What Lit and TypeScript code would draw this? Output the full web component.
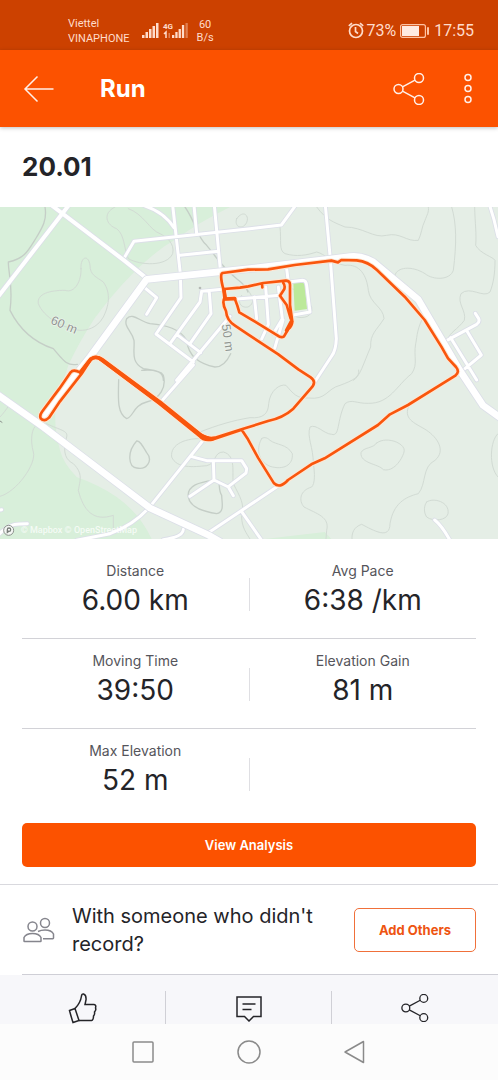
import { LitElement, html, css, svg } from "lit";
import { customElement, property } from "lit/decorators.js";

interface Stat {
  label: string;
  value: string;
}

const STATS: Stat[][] = [
  [
    { label: "Distance", value: "6.00 km" },
    { label: "Avg Pace", value: "6:38 /km" },
  ],
  [
    { label: "Moving Time", value: "39:50" },
    { label: "Elevation Gain", value: "81 m" },
  ],
  [{ label: "Max Elevation", value: "52 m" }],
];

const CONTOURS = [
  "M135 0C142 40 125 65 110 90C85 130 75 155 25 165C25 200 40 240 30 310C60 370 100 405 160 425C190 460 200 478 232 472",
  "M380 335C400 315 420 345 450 350C500 355 540 365 560 400C565 450 600 470 645 480C670 480 685 455 692 440",
  "M490 520C490 490 460 490 430 485C390 465 405 430 402 400C395 370 370 360 380 335",
  "M356 518C355 570 350 620 380 635C400 630 400 595 440 585C480 575 500 540 490 505C480 485 440 490 425 490",
  "M410 702C380 735 385 780 410 783C440 790 460 760 440 737C430 720 420 700 410 702Z",
  "M640 820C600 825 560 835 565 870C570 905 620 915 650 920C675 915 665 885 665 865C655 850 660 830 655 820",
  "M555 0C590 50 590 90 620 115C650 150 660 175 710 215C730 230 740 240 744 255",
];

const FAINT_CONTOURS = [
  "M243 185C240 150 265 140 270 175C270 205 290 210 310 225C335 260 325 300 310 330C290 365 260 370 240 370C190 365 130 330 115 290C110 260 150 250 195 250C225 260 245 220 243 185Z",
  "M345 0C305 20 320 55 350 65C375 85 370 120 385 155C420 175 500 180 518 140C525 110 500 90 480 80C450 70 430 20 385 5",
  "M710 35C730 8 745 25 742 40C735 70 700 65 710 35Z",
  "M0 868C50 855 110 770 100 735C90 700 95 660 110 655M140 650C180 670 205 670 200 690C185 740 200 760 220 770C250 800 240 820 235 850C250 910 280 945 340 925L340 975",
  "M610 695C560 692 510 710 515 750C530 785 580 780 620 776C650 770 640 735 670 735C710 745 695 800 700 830C720 870 735 890 725 930C725 960 740 980 750 996",
  "M600 675C650 655 700 640 750 632C790 635 805 620 806 590C810 550 840 530 858 535C880 560 890 575 925 573C980 580 980 545 1020 535C1060 520 1080 510 1076 489",
  "M950 0C980 40 1000 45 1035 60C1090 60 1120 95 1160 85C1200 75 1220 105 1255 100C1265 80 1265 60 1275 40C1280 25 1288 15 1285 0",
  "M840 60C845 100 835 130 855 140C890 150 920 145 950 135C975 140 995 170 1035 175C1080 170 1100 205 1105 250C1110 290 1150 300 1152 335C1130 370 1110 380 1112 420C1090 470 1080 510 1060 520",
  "M1355 0C1370 50 1370 110 1360 190C1350 220 1300 220 1275 200C1235 175 1190 180 1185 205",
  "M1424 0C1425 50 1430 80 1427 115C1440 140 1480 150 1485 160C1485 200 1480 230 1470 255C1450 275 1410 235 1383 260C1370 290 1400 310 1393 340C1370 370 1350 375 1345 395",
  "M1265 340C1250 370 1250 400 1247 410C1240 450 1255 470 1235 500C1190 535 1170 590 1105 589C1070 590 1055 575 1035 590C1010 640 1020 690 995 682C970 680 950 650 930 660C920 690 940 720 940 770C945 800 945 830 935 840C900 850 895 880 912 900C950 920 990 930 980 970L978 996",
  "M1225 600C1210 640 1250 650 1280 670C1310 690 1340 730 1305 760C1265 780 1280 830 1255 860C1215 870 1180 890 1170 950C1170 1000 1120 970 1085 952C1060 960 1055 980 1056 996",
  "M1130 708C1160 685 1220 710 1212 735C1205 760 1180 795 1150 788C1135 770 1080 770 1083 737C1090 720 1120 725 1130 708Z",
  "M785 695C770 720 770 760 810 778C850 790 880 775 877 740C860 710 830 715 810 700C800 690 790 690 785 695Z",
  "M1280 885C1300 870 1350 885 1344 920C1340 940 1300 945 1280 930C1270 915 1272 895 1280 885Z",
  "M1494 680C1470 700 1465 780 1494 810",
  "M0 630C10 620 20 605 25 598",
  "M875 245C900 250 920 275 935 300C940 330 910 335 890 330",
  "M744 250C760 270 765 290 744 300C720 305 710 280 725 265",
];

const STREETS = [
  "M430 -5Q492 15 522 62",
  "M518 -5L541 200L543 272L468 381L580 465",
  "M582 -5L590 80",
  "M643 -5L661 188",
  "M540 145L655 133",
  "M370 157L402 103L750 65L844 54L887 -5",
  "M435 243L470 272L440 322",
  "M675 246L605 253L600 285L510 410",
  "M628 257L633 320L570 410",
  "M530 382L602 437",
  "M690 328L530 520",
  "M580 474L485 582",
  "M976 -5L990 145L1009 395Q1008 430 995 447L942 528",
  "M860 185L865 225L908 220Q918 220 920 235L930 315L880 324",
  "M700 277L840 265",
  "M763 270L770 335",
  "M797 240L805 352L785 396",
  "M835 240L847 335L820 380",
  "M849 339L824 424",
  "M1334 404L1430 352Q1440 345 1436 335L1426 319",
  "M1352 392L1430 519",
  "M1399 369L1444 444L1384 494",
  "M1469 -5L1482 38L1494 89",
  "M610 699L450 899Q400 955 330 980L230 1000",
  "M575 749L620 761L725 761L740 785L738 798L685 839",
  "M640 761L642 819L570 868",
  "M642 819L685 840L700 866",
  "M615 984L748 895L840 833",
  "M725 914L785 1000",
  "M550 967Q550 990 490 998",
  "M1304 939Q1325 955 1350 1000",
  "M-5 984Q25 950 60 951L82 950",
  "M-5 910L5 908",
];

const AVENUES = ["M155 -5L372 160L440 214", "M206 -5L-5 268"];

const HIGHWAYS = [
  "M125 632L270 450L440 217L750 185L1050 149Q1085 145 1120 165L1255 278L1378 488L1449 595L1500 632",
  "M-10 561L130 660L450 903L625 984L660 1004",
];

const ROUTE =
  "M725 668L640 697Q612 704 598 687L478 590L390 524L303 459Q288 446 272 458L245 500L180 583L147 632Q133 646 122 634Q118 625 126 614L165 562L178 545L212 496Q220 486 240 496L266 462Q285 440 309 458L392 519L482 585L602 682Q618 696 645 692L725 667L804 642Q850 632 880 605L932 545Q952 525 932 511L895 487L835 442L744 382L705 356Q680 340 678 312Q664 285 675 270L670 246Q658 200 668 198L744 188L804 187L884 174L994 161L1014 166L1024 159L1070 160Q1105 164 1130 188L1214 269L1274 339L1324 419L1344 454L1368 480Q1380 495 1366 506L1224 594L1170 622L1134 654L974 754L934 772L864 819Q840 846 822 829L774 752L744 697Z";

const LAPS =
  "M672 246L720 242L745 238L790 228L858 221Q871 222 870 236L870 294L877 344Q876 358 865 366L852 388Q844 394 832 385L765 344L718 316L712 296L704 274L677 276L672 246M787 241L786 230M850 228Q856 236 853 246L840 266L860 294L872 335";

const OVERLAPS = "M242 496L272 457Q287 446 303 457L390 521L480 588L600 684L625 694M672 248L675 276L704 275M874 344L860 370";

const shareIcon = (size: number) => svg`
  <svg class="icon" width=${size} height=${size} viewBox="0 0 32 32" aria-hidden="true">
    <circle cx="5.500" cy="16" r="4.500"></circle>
    <circle cx="26" cy="5" r="4.500"></circle>
    <circle cx="26" cy="27" r="4.500"></circle>
    <path d="M9.500 13.900L22 7.100M9.500 18.100L22 24.900"></path>
  </svg>`;

@customElement("status-bar")
class StatusBar extends LitElement {
  static styles = css`
    :host {
      display: flex;
      justify-content: space-between;
      height: 50px;
      padding: 14px 24px 0 68px;
      box-sizing: border-box;
      background: #cc4100;
      color: #ffdccb;
      font-family: Roboto, sans-serif;
    }
    .group {
      display: flex;
      align-items: flex-start;
    }
    .carrier {
      font-size: 11px;
      line-height: 15px;
      padding-top: 2px;
    }
    .signal {
      margin: 8px 0 0 12px;
    }
    .rate {
      font-size: 11px;
      line-height: 13px;
      text-align: center;
      margin: 4px 0 0 8px;
    }
    .clock {
      font-size: 16px;
      line-height: 20px;
      padding-top: 7px;
    }
    .alarm {
      margin: 8px 2px 0 0;
    }
    .battery {
      margin: 10px 5px 0 4px;
    }
  `;

  render() {
    return html`
      <div class="group">
        <div class="carrier">Viettel<br />VINAPHONE</div>
        <svg class="signal" width="47" height="17" viewBox="0 0 47 17" fill="#ffdccb">
          <path d="M0 13h2.500v3H0zM3.500 10H6v6H3.500zM7 7h2.500v9H7zM10.500 4H13v12h-2.500zM14 1h2.500v15H14z"></path>
          <path d="M30 13h2.300v3H30zM33.300 10h2.300v6h-2.300zM36.600 7h2.300v9h-2.300zM39.900 3h2.300v13h-2.300z"></path>
          <path opacity=".4" d="M43.500 1h2.300v15h-2.300zM26.500 11h1.500v5h-1.500z"></path>
          <path d="M24 16v-6l-2 2" fill="none" stroke="#ffdccb" stroke-width="1.500"></path>
          <text x="21" y="7" font-size="8" font-weight="700" font-family="Roboto, sans-serif">4G</text>
        </svg>
        <div class="rate">60<br />B/s</div>
      </div>
      <div class="group">
        <svg class="alarm" width="16" height="17" viewBox="0 0 16 17" fill="none" stroke="#ffdccb" stroke-width="1.700">
          <circle cx="8" cy="9" r="6.500"></circle>
          <path d="M7.500 5v4.500l2.500 2M.8 3.800L4 1.200M15.200 3.800L12 1.200"></path>
        </svg>
        <span class="clock">73%</span>
        <svg class="battery" width="29" height="14" viewBox="0 0 29 14">
          <rect x=".6" y=".6" width="24.800" height="12.800" rx="2" fill="none" stroke="#ffc3a3" stroke-width="1.200"></rect>
          <rect x="2" y="2" width="17" height="10" fill="#ffebe2"></rect>
          <rect x="27" y="3" width="2" height="8" rx="1" fill="#ffc3a3"></rect>
        </svg>
        <span class="clock">17:55</span>
      </div>
    `;
  }
}

@customElement("route-map")
class RouteMap extends LitElement {
  static styles = css`
    :host {
      display: block;
    }
    .map {
      display: block;
      width: 100%;
      height: auto;
    }
    .line {
      fill: none;
      stroke-linejoin: round;
      stroke-linecap: round;
    }
    .contour {
      stroke: #c5cec7;
      stroke-width: 4;
    }
    .faint {
      stroke: #d2dbd4;
      stroke-width: 3;
    }
    .casing {
      stroke: #dcdfe8;
    }
    .road {
      stroke: #ffffff;
    }
    .route-halo {
      stroke: #fde6d4;
      stroke-width: 14;
    }
    .route {
      stroke: #f9560d;
      stroke-width: 8;
    }
    .overlap {
      stroke: #f9560d;
      stroke-width: 11;
    }
    .elevation {
      font: 500 37px "Liberation Sans", sans-serif;
      fill: #8f9590;
      stroke: #eef3ee;
      stroke-width: 4;
      paint-order: stroke;
      text-anchor: middle;
    }
    .credit {
      font: 500 27px Roboto, sans-serif;
      fill: #ffffff;
      fill-opacity: 0.75;
    }
  `;

  private roads(paths: string[], width: number) {
    const d = paths.join("");
    return svg`
      <path class="line casing" stroke-width=${width + 5} d=${d}></path>
      <path class="line road" stroke-width=${width} d=${d}></path>`;
  }

  render() {
    return html`
      <svg class="map" viewBox="0 0 1494 996" role="img" aria-label="Route map">
        <rect width="1494" height="996" fill="#e5eee6"></rect>
        <path
          fill="#d8efda"
          d="M0 0H690Q590 50 530 95C430 150 330 270 280 340Q235 410 205 475L168 590Q160 660 180 730Q190 770 230 810Q300 835 350 870Q420 920 455 996H0Z"
        ></path>
        <path fill="#d8efda" d="M794 996L974 975L994 996Z"></path>
        <path class="line faint" d=${FAINT_CONTOURS.join("")}></path>
        <path class="line contour" d=${CONTOURS.join("")}></path>
        <circle cx="600" cy="243" r="4" fill="#b5bab6"></circle>
        <path fill="#bce99a" d="M880 229L914 226L921 306L884 311Z"></path>
        ${this.roads(STREETS, 9)} ${this.roads(AVENUES, 12)} ${this.roads(HIGHWAYS, 20)}
        <text class="elevation" transform="translate(188 365) rotate(23)">60 m</text>
        <text class="elevation" transform="translate(671 394) rotate(82)">50 m</text>
        <path class="line route-halo" d=${ROUTE + LAPS}></path>
        <path class="line route" d=${ROUTE + LAPS}></path>
        <path class="line overlap" d=${OVERLAPS}></path>
        <circle cx="26" cy="970" r="15" fill="#f4f7f4" stroke="#8d938e" stroke-width="3"></circle>
        <path d="M20 980V968A7 7 0 1 1 27 975Z" fill="#777d78"></path>
        <circle cx="27" cy="968" r="3" fill="#ffffff"></circle>
        <path class="line" stroke="#8d938e" stroke-width="3" d="M0 642L6 646"></path>
        <text class="credit" x="62" y="979">© Mapbox © OpenStreetMap</text>
      </svg>
    `;
  }
}

@customElement("stat-grid")
class StatGrid extends LitElement {
  static styles = css`
    :host {
      display: block;
      padding: 10px 22px 0;
    }
    .row {
      display: grid;
      grid-template-columns: 1fr 1px 1fr;
      height: 90px;
      padding-top: 12px;
      box-sizing: border-box;
      border-bottom: 1px solid #d2d2d7;
    }
    .row:last-child {
      height: 80px;
      border-bottom: 0;
    }
    .stat {
      margin: 0;
      text-align: center;
    }
    .rule {
      height: 33px;
      margin-top: 17px;
      background: #dfdfe3;
    }
    .label {
      font-size: 14px;
      line-height: 20px;
      color: #55555b;
    }
    .value {
      margin: 0;
      font-size: 28px;
      line-height: 38px;
      color: #242428;
    }
  `;

  @property({ attribute: false }) rows: Stat[][] = [];

  private cell(stat?: Stat) {
    return stat
      ? html`<dl class="stat">
          <dt class="label">${stat.label}</dt>
          <dd class="value">${stat.value}</dd>
        </dl>`
      : html`<span></span>`;
  }

  render() {
    return this.rows.map(
      ([left, right]) => html`
        <div class="row">${this.cell(left)}<span class="rule"></span>${this.cell(right)}</div>
      `
    );
  }
}

@customElement("app-root")
class AppRoot extends LitElement {
  static styles = css`
    :host {
      display: flex;
      flex-direction: column;
      min-height: 100vh;
      background: #ffffff;
      color: #242428;
      font-family: Inter, sans-serif;
    }
    button {
      font-family: inherit;
      padding: 0;
      border: 0;
      background: none;
      color: inherit;
      cursor: pointer;
    }
    .icon {
      display: block;
      fill: none;
      stroke: currentColor;
      stroke-width: 1.5;
    }
    .app-bar {
      display: flex;
      align-items: center;
      height: 77px;
      padding: 0 24px 0 23px;
      box-sizing: border-box;
      background: #fc5200;
      color: #fff0e8;
      box-shadow: 0 1px 4px rgba(0, 0, 0, 0.25);
    }
    .app-title {
      flex: 1;
      margin: 0 0 0 46px;
      font-size: 24px;
      line-height: 30px;
      font-weight: 700;
      color: #ffffff;
    }
    .more {
      margin-left: 37px;
    }
    .content {
      flex: 1;
    }
    .activity-title {
      margin: 0;
      padding: 24px 22px;
      font-size: 26px;
      line-height: 32px;
      font-weight: 700;
    }
    .analysis {
      padding: 14px 22px 17px;
      border-bottom: 1px solid #d9d9de;
    }
    .primary {
      display: block;
      width: 100%;
      height: 44px;
      border-radius: 5px;
      background: #fc5200;
      color: #ffffff;
      font-size: 13px;
      font-weight: 600;
    }
    .invite {
      display: flex;
      align-items: center;
      margin-left: 22px;
      padding-right: 22px;
      height: 90px;
      box-sizing: border-box;
      border-bottom: 1px solid #cfcfd6;
    }
    .people {
      color: #85858d;
      flex: none;
    }
    .question {
      flex: 1;
      margin: 0 20px 0 17px;
      font-size: 20px;
      line-height: 28px;
    }
    .outline {
      flex: none;
      width: 122px;
      height: 44px;
      border: 1px solid #f0703a;
      border-radius: 5px;
      color: #ee5411;
      font-size: 13px;
      font-weight: 700;
    }
    .actions {
      display: grid;
      grid-template-columns: 1fr 1fr 1fr;
      padding-top: 16px;
      background: #f7f7fa;
    }
    .action {
      display: flex;
      justify-content: center;
      align-items: center;
      height: 33px;
    }
    .action:not(:last-child) {
      border-right: 1px solid #d0d0d6;
    }
    .nav {
      display: flex;
      justify-content: center;
      align-items: center;
      gap: 82px;
      height: 56px;
      background: #fcfcfc;
      color: #8a8a8a;
    }
  `;

  render() {
    return html`
      <status-bar></status-bar>
      <header class="app-bar">
        <button aria-label="Back">
          <svg class="icon" width="31" height="28" viewBox="0 0 31 28">
            <path d="M14.500 1.500L2 14L14.500 26.500M2 14H30.500"></path>
          </svg>
        </button>
        <h1 class="app-title">Run</h1>
        <button aria-label="Share">${shareIcon(32)}</button>
        <button class="more" aria-label="More options">
          <svg class="icon" width="12" height="32" viewBox="0 0 12 32">
            <circle cx="6" cy="4.500" r="3"></circle>
            <circle cx="6" cy="15.500" r="3"></circle>
            <circle cx="6" cy="26.500" r="3"></circle>
          </svg>
        </button>
      </header>
      <main class="content">
        <h2 class="activity-title">20.01</h2>
        <route-map></route-map>
        <stat-grid .rows=${STATS}></stat-grid>
        <div class="analysis"><button class="primary">View Analysis</button></div>
        <section class="invite">
          <svg class="icon people" width="33" height="26" viewBox="0 0 33 26" aria-hidden="true">
            <circle cx="10.500" cy="9.500" r="4.500"></circle>
            <circle cx="23" cy="6" r="4.500"></circle>
            <path d="M2.500 24.500Q2 24.500 2 24V20.500Q4 16.500 10.500 16.500T19 20.500V24Q19 24.500 18.500 24.500Z"></path>
            <path d="M16 14.500Q19 13 23 13Q29.500 13 31.500 17V21Q31.500 21.700 30.800 21.700H21"></path>
          </svg>
          <p class="question">With someone who didn't record?</p>
          <button class="outline">Add Others</button>
        </section>
      </main>
      <div class="actions">
        <button class="action" aria-label="Give kudos">
          <svg class="icon" width="30" height="32" viewBox="0 0 30 32">
            <path d="M1.500 18.500L7 16.500L11 28.500L5 30.500Q3.500 26 1.500 18.500Z"></path>
            <path d="M7 16.500Q12.500 11 13.500 4Q14 1.500 15.500 2Q18.500 3 18 8L17 12.500H26Q28.500 13 27.500 16Q28.500 18 26.500 20Q27 22.500 25.500 24Q25.500 28 23.500 28.500H11"></path>
          </svg>
        </button>
        <button class="action" aria-label="Comments">
          <svg class="icon" width="28" height="28" viewBox="0 0 28 28">
            <path d="M2 3H26V22.500H18.500L14 27L9.500 22.500H2ZM7.500 10H20.500M7.500 15.500H16.500"></path>
          </svg>
        </button>
        <button class="action" aria-label="Share activity">${shareIcon(28)}</button>
      </div>
      <nav class="nav" aria-label="System">
        <button aria-label="Recent apps">
          <svg class="icon" width="24" height="24" viewBox="0 0 24 24">
            <rect x="2" y="2" width="20" height="20" rx="1"></rect>
          </svg>
        </button>
        <button aria-label="Home">
          <svg class="icon" width="24" height="24" viewBox="0 0 24 24"><circle cx="12" cy="12" r="11"></circle></svg>
        </button>
        <button aria-label="Go back">
          <svg class="icon" width="24" height="24" viewBox="0 0 24 24" stroke-linejoin="round">
            <path d="M2 12L20.500 1.500V22.500Z"></path>
          </svg>
        </button>
      </nav>
    `;
  }
}
